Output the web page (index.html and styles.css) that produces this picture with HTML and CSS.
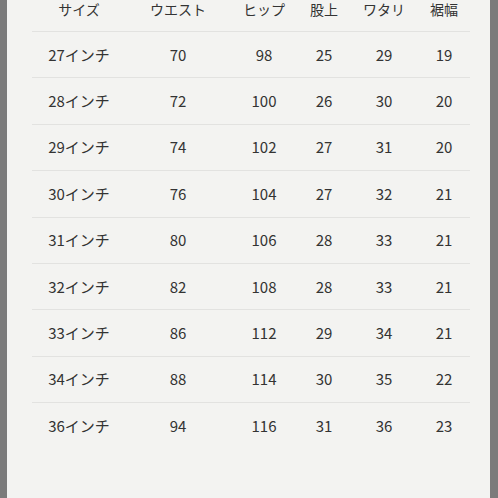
FILE: index.html
```html
<!DOCTYPE html>
<html lang="ja">
<head>
<meta charset="utf-8">
<link rel="stylesheet" href="styles.css">
</head>
<body>
<div class="frame">
  <div class="side side-left"></div>
  <main class="sheet">
    <table class="size-table">
      <colgroup>
        <col class="c1"><col class="c2"><col class="c3"><col class="c4"><col class="c5"><col class="c6">
      </colgroup>
      <thead>
        <tr><th>サイズ</th><th>ウエスト</th><th>ヒップ</th><th>股上</th><th>ワタリ</th><th>裾幅</th></tr>
      </thead>
      <tbody>
        <tr><td>27インチ</td><td>70</td><td>98</td><td>25</td><td>29</td><td>19</td></tr>
        <tr><td>28インチ</td><td>72</td><td>100</td><td>26</td><td>30</td><td>20</td></tr>
        <tr><td>29インチ</td><td>74</td><td>102</td><td>27</td><td>31</td><td>20</td></tr>
        <tr><td>30インチ</td><td>76</td><td>104</td><td>27</td><td>32</td><td>21</td></tr>
        <tr><td>31インチ</td><td>80</td><td>106</td><td>28</td><td>33</td><td>21</td></tr>
        <tr><td>32インチ</td><td>82</td><td>108</td><td>28</td><td>33</td><td>21</td></tr>
        <tr><td>33インチ</td><td>86</td><td>112</td><td>29</td><td>34</td><td>21</td></tr>
        <tr><td>34インチ</td><td>88</td><td>114</td><td>30</td><td>35</td><td>22</td></tr>
        <tr><td>36インチ</td><td>94</td><td>116</td><td>31</td><td>36</td><td>23</td></tr>
      </tbody>
    </table>
  </main>
  <div class="side side-right"></div>
</div>
</body>
</html>
```
FILE: styles.css
```css
html, body {
  margin: 0;
  padding: 0;
  height: 100%;
}
body {
  background: #f3f3f1;
  font-family: "Noto Sans CJK JP", "Noto Sans", sans-serif;
  color: #333333;
}
.frame {
  display: flex;
  height: 498px;
  overflow: hidden;
}
.side {
  background: #7b7b7b;
  flex: none;
}
.side-left { width: 7px; }
.side-right { width: 8px; }
.sheet {
  flex: 1;
  background: #f3f3f1;
  padding-left: 25px;
}
.size-table {
  border-collapse: collapse;
  width: 438px;
  table-layout: fixed;
  font-size: 15px;
}
.c1 { width: 94px; }
.c2 { width: 104px; }
.c3 { width: 68px; }
.c4 { width: 52px; }
.c5 { width: 68px; }
.c6 { width: 52px; }
.size-table th {
  font-weight: normal;
  font-size: 14px;
  height: 30px;
  padding: 1px 0 0;
  vertical-align: top;
  line-height: 16px;
  text-align: center;
}
.size-table td {
  height: 45.4px;
  padding: 0;
  text-align: center;
  vertical-align: middle;
  border-top: 1px solid #e2e2e0;
  line-height: 20px;
}
```
